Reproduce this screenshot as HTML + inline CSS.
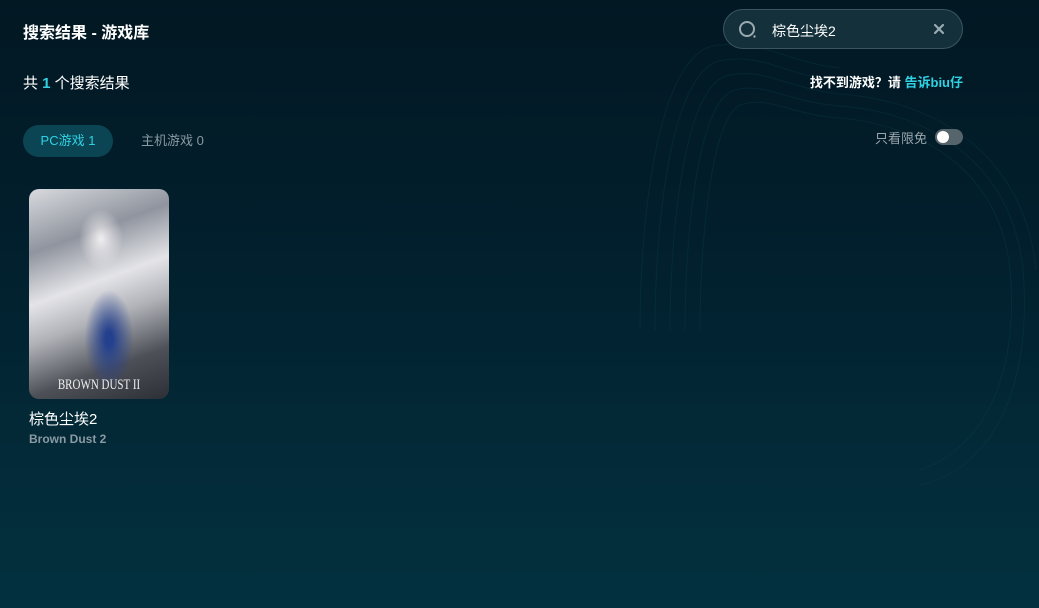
<!DOCTYPE html>
<html><head><meta charset="utf-8"><style>
*{margin:0;padding:0;box-sizing:border-box}
body{width:1039px;height:608px;overflow:hidden;position:relative;font-family:"Liberation Sans","Noto Sans CJK SC",sans-serif;color:#fff;
background:linear-gradient(180deg,#021823 0%,#021f2d 40%,#032a38 75%,#03313f 100%);}
.abs{position:absolute}
.title{left:23px;top:19px;font-size:16px;font-weight:bold}
.count{left:23px;top:72px;font-size:15px}
.count b{color:#2fd1e3}
.search{left:723px;top:9px;width:240px;height:40px;border:1px solid #3a5560;border-radius:20px;background:#13303b}
.search .txt{position:absolute;left:48px;top:11px;font-size:14px}
.tip{right:76px;top:72px;font-size:13px;font-weight:bold}
.tip span{color:#2fd1e3}
.tab1{left:23px;top:125px;width:90px;height:32px;border-radius:16px;background:#0b4553;color:#2fd1e3;font-size:13px;line-height:32px;text-align:center}
.tab2{left:141px;top:125px;height:32px;line-height:32px;color:#8a9aa2;font-size:13px}
.free{left:875px;top:128px;font-size:13px;color:#9aa6ab}
.tog{left:935px;top:129px;width:28px;height:16px;border-radius:8px;background:#56656b}
.tog:after{content:"";position:absolute;left:2px;top:2px;width:12px;height:12px;border-radius:50%;background:#fff}
.card{left:29px;top:189px;width:140px;height:210px;border-radius:10px;overflow:hidden;
background:radial-gradient(ellipse 22px 30px at 72px 50px,#f0eef0,transparent),radial-gradient(ellipse 35px 70px at 80px 150px,#23408e 10%,transparent 70%),linear-gradient(160deg,#d8dade 0%,#8f949e 25%,#e4e4e8 45%,#b0b2b8 60%,#4e5058 80%,#2d2f36 100%)}
.card .logo{position:absolute;left:0;right:0;bottom:8px;text-align:center;font-family:"Liberation Serif",serif;font-size:11px;color:#eee;transform:scaleY(1.3)}
.gname{left:29px;top:408px;font-size:15px}
.gsub{left:29px;top:432px;font-size:12px;color:#8a9aa2;font-weight:bold}
</style></head><body>
<svg class="abs" style="left:0;top:0" width="1039" height="608">
<g fill="none" stroke="#0d4450" stroke-opacity="0.3" stroke-width="1">
<path d="M700 330 C700 250 710 120 740 105 C770 95 790 115 840 118 C920 125 1000 170 1010 270 C1020 380 980 450 920 470"/>
<path d="M685 330 C685 240 697 100 735 90 C765 82 788 102 840 106 C925 112 1012 160 1023 270 C1033 390 990 470 920 485"/>
<path d="M670 330 C670 230 685 80 730 75 C765 68 786 88 840 94 C930 100 1024 150 1036 270"/>
<path d="M655 330 C655 220 672 62 725 60 C765 54 785 75 840 82"/>
<path d="M640 330 C640 210 660 45 720 45 C765 40 785 62 840 68"/>
</g></svg>
<div class="abs title">搜索结果 - 游戏库</div>
<div class="abs count">共 <b>1</b> 个搜索结果</div>
<div class="abs search">
<svg style="position:absolute;left:14px;top:10px" width="20" height="20" viewBox="0 0 20 20"><circle cx="9" cy="9" r="7" fill="none" stroke="#9aaab0" stroke-width="2"/><circle cx="16.5" cy="16.5" r="1.2" fill="#9aaab0"/></svg>
<div class="txt">棕色尘埃2</div>
<svg style="position:absolute;left:209px;top:13px" width="12" height="12" viewBox="0 0 12 12"><path d="M2 2L10 10M10 2L2 10" stroke="#9aaab0" stroke-width="2.2" stroke-linecap="round"/></svg>
</div>
<div class="abs tip">找不到游戏？请 <span>告诉biu仔</span></div>
<div class="abs tab1">PC游戏 1</div>
<div class="abs tab2">主机游戏 0</div>
<div class="abs free">只看限免</div>
<div class="abs tog"></div>
<div class="abs card"><div class="logo">BROWN DUST II</div></div>
<div class="abs gname">棕色尘埃2</div>
<div class="abs gsub">Brown Dust 2</div>
</body></html>
